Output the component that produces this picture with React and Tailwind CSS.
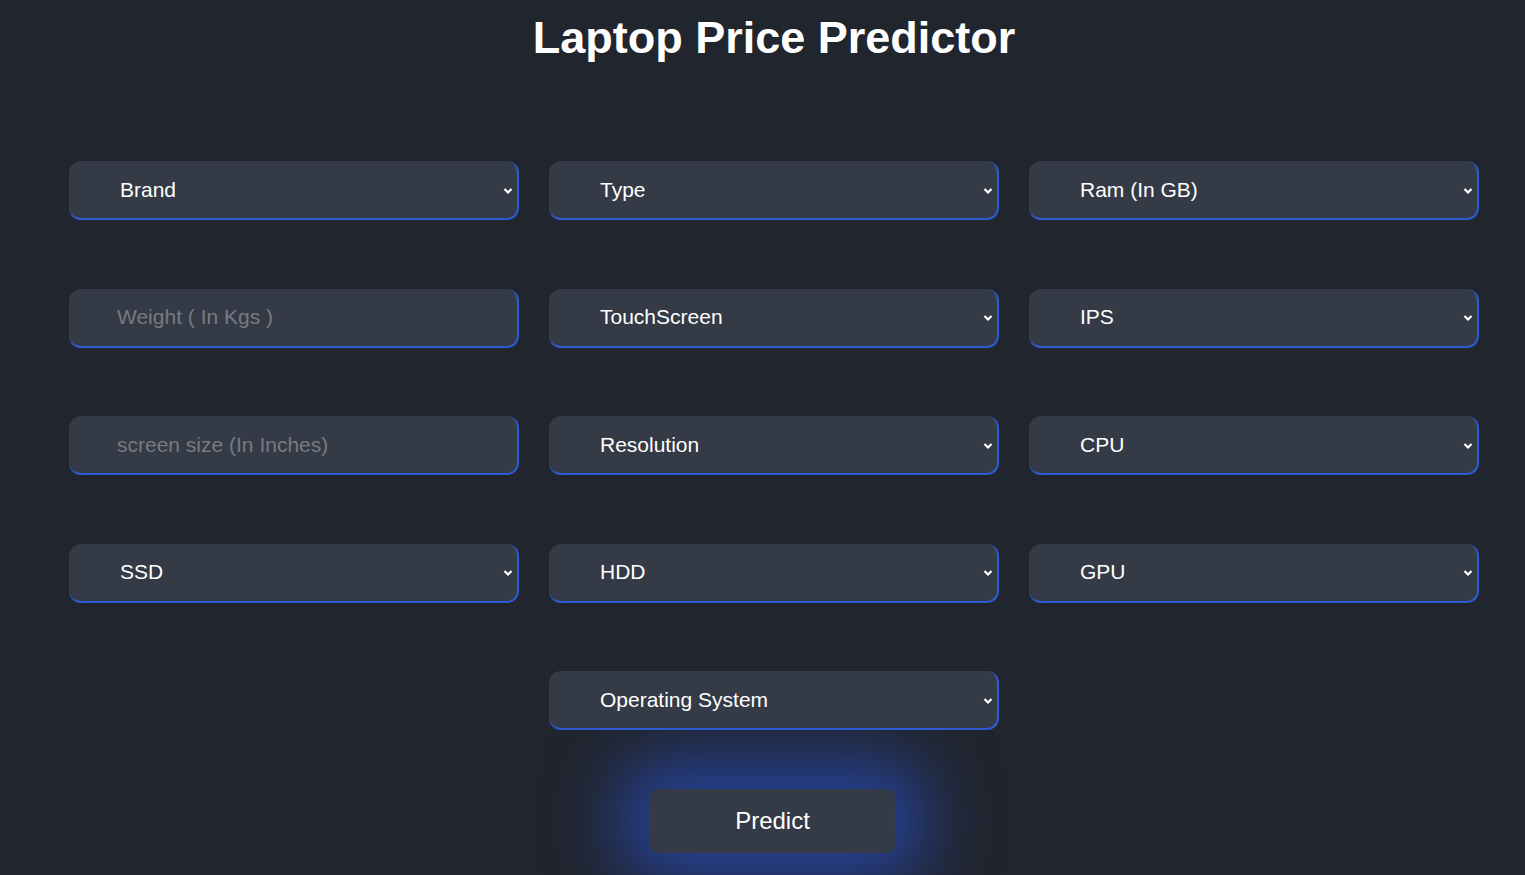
import { useState } from 'react'

const fields = [
  { label: 'Brand', kind: 'select' },
  { label: 'Type', kind: 'select' },
  { label: 'Ram (In GB)', kind: 'select' },
  { label: 'Weight ( In Kgs )', kind: 'input' },
  { label: 'TouchScreen', kind: 'select' },
  { label: 'IPS', kind: 'select' },
  { label: 'screen size (In Inches)', kind: 'input' },
  { label: 'Resolution', kind: 'select' },
  { label: 'CPU', kind: 'select' },
  { label: 'SSD', kind: 'select' },
  { label: 'HDD', kind: 'select' },
  { label: 'GPU', kind: 'select' },
]

const fieldBase =
  'w-full h-[59px] rounded-[12px] bg-[#343a46] border-r-2 border-b-2 border-[#2c5bd4] text-white text-[21px] outline-none'

function Chevron() {
  return (
    <svg
      className="pointer-events-none absolute right-[6px] top-1/2 -translate-y-1/2"
      width="10"
      height="7"
      viewBox="0 0 10 7"
      fill="none"
    >
      <path d="M1.5 1.5l3.5 3.5 3.5-3.5" stroke="#ffffff" strokeWidth="2.2" />
    </svg>
  )
}

function SelectField({ label }) {
  return (
    <div className="relative">
      <select className={`${fieldBase} appearance-none pl-[51px] pr-10`} defaultValue="">
        <option value="">{label}</option>
      </select>
      <Chevron />
    </div>
  )
}

function InputField({ label }) {
  const [value, setValue] = useState('')
  return (
    <input
      className={`${fieldBase} pl-[48px] placeholder:text-[#777b82]`}
      placeholder={label}
      value={value}
      onChange={(e) => setValue(e.target.value)}
    />
  )
}

export default function App() {
  return (
    <div
      className="min-h-screen bg-[#21252e] overflow-hidden"
      style={{ fontFamily: '"Liberation Sans", Arial, sans-serif' }}
    >
      <div className="w-[1410px] ml-[69px] flex flex-col items-center">
        <h1 className="mt-[12px] text-[45px] leading-[52px] font-bold text-white">Laptop Price Predictor</h1>

        <div className="mt-[97px] w-full grid grid-cols-3 gap-x-[30px] gap-y-[68.5px]">
          {fields.map((f) =>
            f.kind === 'select' ? (
              <SelectField key={f.label} label={f.label} />
            ) : (
              <InputField key={f.label} label={f.label} />
            )
          )}
          <div />
          <SelectField label="Operating System" />
        </div>

        <button className="mt-[59px] mr-[3px] w-[245px] h-[64px] rounded-[8px] bg-[#343a46] text-white text-[24px] shadow-[0_0_70px_28px_rgba(40,80,200,0.7)]">
          Predict
        </button>
      </div>
    </div>
  )
}
